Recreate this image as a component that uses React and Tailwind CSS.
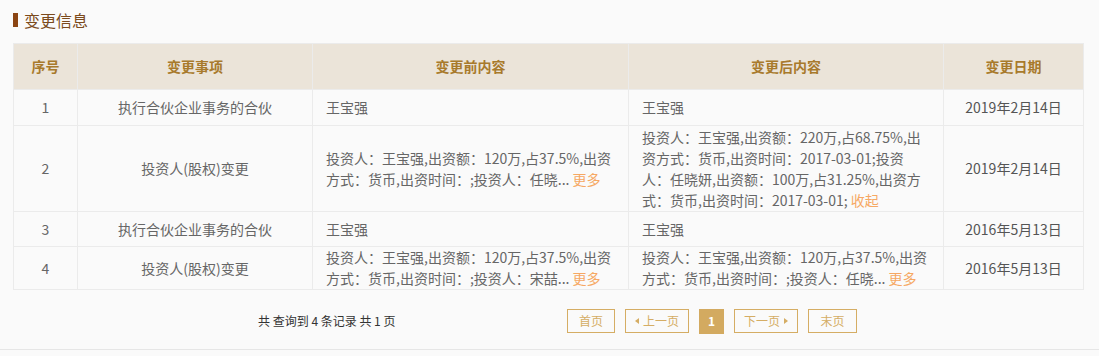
const rows = [
  {
    no: 1,
    h: 'h-[36px]',
    item: '执行合伙企业事务的合伙',
    before: ['王宝强'],
    after: ['王宝强'],
    date: '2019年2月14日',
  },
  {
    no: 2,
    h: 'h-[86px]',
    item: '投资人(股权)变更',
    before: ['投资人：王宝强,出资额：120万,占37.5%,出资', '方式：货币,出资时间：;投资人：任晓...'],
    beforeLink: '更多',
    after: [
      '投资人：王宝强,出资额：220万,占68.75%,出',
      '资方式：货币,出资时间：2017-03-01;投资',
      '人：任晓妍,出资额：100万,占31.25%,出资方',
      '式：货币,出资时间：2017-03-01;',
    ],
    afterLink: '收起',
    date: '2019年2月14日',
  },
  {
    no: 3,
    h: 'h-[35px]',
    item: '执行合伙企业事务的合伙',
    before: ['王宝强'],
    after: ['王宝强'],
    date: '2016年5月13日',
  },
  {
    no: 4,
    h: 'h-[43px]',
    item: '投资人(股权)变更',
    before: ['投资人：王宝强,出资额：120万,占37.5%,出资', '方式：货币,出资时间：;投资人：宋喆...'],
    beforeLink: '更多',
    after: ['投资人：王宝强,出资额：120万,占37.5%,出资', '方式：货币,出资时间：;投资人：任晓...'],
    afterLink: '更多',
    date: '2016年5月13日',
  },
];

function Lines({ lines, link }) {
  return (
    <>
      {lines.map((l, i) => (
        <div key={i} className="whitespace-nowrap">
          {l}
          {i === lines.length - 1 && link && <span className="text-[#f6a863]"> {link}</span>}
        </div>
      ))}
    </>
  );
}

function PageBtn({ children, className }) {
  return (
    <button
      className={
        'h-[24px] flex items-center justify-center gap-[4px] text-[12px] border border-[#d5ad64] text-[#d5ad64] ' +
        className
      }
    >
      {children}
    </button>
  );
}

export default function App() {
  return (
    <div
      className="min-h-[356px] bg-[#fafafa] pt-[9px]"
      style={{ fontFamily: '"Microsoft YaHei", "Noto Sans CJK SC", sans-serif' }}
    >
      <div className="flex items-center ml-[13px] h-[22px]">
        <span className="w-[5px] h-[14px] bg-[#8b4513]" />
        <span className="ml-[6px] text-[16px] leading-[22px] text-[#7b4a1c]">变更信息</span>
      </div>

      <table className="ml-[13px] mt-[12px] w-[1070px] border-collapse text-[14px] text-[#666] table-fixed">
        <colgroup>
          <col className="w-[64px]" />
          <col className="w-[235px]" />
          <col className="w-[316px]" />
          <col className="w-[315px]" />
          <col className="w-[140px]" />
        </colgroup>
        <thead>
          <tr className="bg-[#ebe4d9] text-[#a87a2c] font-bold h-[46px]">
            <th className="border border-[#ebebeb]">序号</th>
            <th className="border border-[#ebebeb]">变更事项</th>
            <th className="border border-[#ebebeb]">变更前内容</th>
            <th className="border border-[#ebebeb]">变更后内容</th>
            <th className="border border-[#ebebeb]">变更日期</th>
          </tr>
        </thead>
        <tbody className="leading-[21px]">
          {rows.map((r) => (
            <tr key={r.no} className={r.h}>
              <td className="border border-[#ebebeb] text-center">{r.no}</td>
              <td className="border border-[#ebebeb] text-center">{r.item}</td>
              <td className="border border-[#ebebeb] px-[13px]">
                <Lines lines={r.before} link={r.beforeLink} />
              </td>
              <td className="border border-[#ebebeb] px-[13px]">
                <Lines lines={r.after} link={r.afterLink} />
              </td>
              <td className="border border-[#ebebeb] text-center text-[#555]">{r.date}</td>
            </tr>
          ))}
        </tbody>
      </table>

      <div className="flex items-center mt-[19px] pl-[258px] h-[24px]">
        <span className="w-[309px] text-[12px] text-[#333]">共 查询到 4 条记录 共 1 页</span>
        <div className="flex items-center gap-[10px]">
          <PageBtn className="w-[48px]">首页</PageBtn>
          <PageBtn className="w-[64px]">
            <span className="w-0 h-0 border-y-[3px] border-y-transparent border-r-[4px] border-r-[#d5ad64]" />
            上一页
          </PageBtn>
          <button className="h-[25px] w-[25px] flex items-center justify-center text-[12px] font-bold bg-[#d3aa60] text-white">
            1
          </button>
          <PageBtn className="w-[64px]">
            下一页
            <span className="w-0 h-0 border-y-[3px] border-y-transparent border-l-[4px] border-l-[#d5ad64]" />
          </PageBtn>
          <PageBtn className="w-[49px]">末页</PageBtn>
        </div>
      </div>

      <div className="mt-[16px] border-t border-[#e6e6e6]" />
    </div>
  );
}
